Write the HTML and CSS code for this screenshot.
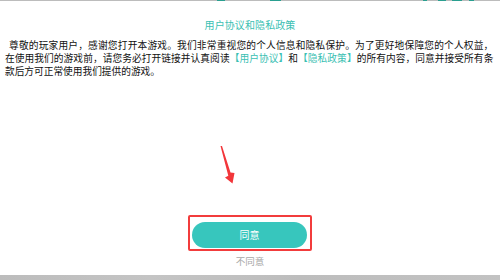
FILE: index.html
```html
<!DOCTYPE html>
<html lang="zh-CN">
<head>
<meta charset="utf-8">
<title>用户协议和隐私政策</title>
<link rel="stylesheet" href="styles.css">
</head>
<body>
<div class="page">
  <div class="topbar"></div>
  <h1 class="title">用户协议和隐私政策</h1>
  <div class="content">
    <span class="ln first">尊敬的玩家用户，感谢您打开本游戏。我们非常重视您的个人信息和隐私保护。为了更好地保障您的个人权益，</span>
    <span class="ln second">在使用我们的游戏前，请您务必打开链接并认真阅读<span class="link">【用户协议】</span>和<span class="link">【隐私政策】</span>的所有内容，同意并接受所有条</span>
    <span class="ln last">款后方可正常使用我们提供的游戏。</span>
  </div>
  <div class="actions">
    <div class="agree">同意<span class="highlight"></span></div>
    <div class="disagree">不同意</div>
  </div>
  <div class="bottombar"></div>
  <svg class="arrow" width="30" height="50" viewBox="215 140 30 50">
    <polygon points="220.5,146 222,146 230.5,172.5 234.5,173 232.5,183.5 225,177.5 228.3,175.8" fill="#f2363a"/>
  </svg>
</div>
</body>
</html>
```
FILE: styles.css
```css
html, body {
  margin: 0;
  padding: 0;
  background: #ffffff;
}
.page {
  position: relative;
  width: 500px;
  height: 280px;
  display: flex;
  flex-direction: column;
  background: #ffffff;
  font-family: "Noto Sans CJK SC", "Noto Sans", sans-serif;
  overflow: hidden;
}
.topbar {
  height: 1px;
  background: linear-gradient(to right,
    #bcbcbc 0, #bcbcbc 217px, #2a9f90 217px, #2a9f90 225px,
    #bcbcbc 225px, #bcbcbc 270px, #2a9f90 270px, #2a9f90 281px,
    #bcbcbc 281px, #bcbcbc 423px, #2a9f90 423px, #2a9f90 427px,
    #bcbcbc 427px, #bcbcbc 438px, #2a9f90 438px, #2a9f90 446px,
    #bcbcbc 446px, #bcbcbc 452px, #2a9f90 452px, #2a9f90 462px,
    #bcbcbc 462px, #bcbcbc 469px, #2a9f90 469px, #2a9f90 474px,
    #bcbcbc 474px, #bcbcbc 100%);
}
.title {
  margin: 17px 0 0;
  font-size: 10px;
  line-height: 14px;
  font-weight: normal;
  letter-spacing: 0.1px;
  text-align: center;
  color: #3bbfb3;
}
.content {
  margin-top: 7px;
  padding: 0 3px 0 5px;
  font-size: 9.7px;
  line-height: 13px;
  color: #111111;
}
.ln {
  display: block;
  white-space: nowrap;
}
.ln.first {
  text-indent: 4px;
  letter-spacing: 0.2px;
}
.ln.second {
  letter-spacing: 0.08px;
}
.link {
  color: #3bbfb3;
}
.actions {
  margin-top: auto;
  margin-bottom: 8px;
  display: flex;
  flex-direction: column;
  align-items: center;
}
.agree {
  position: relative;
  width: 115px;
  height: 26px;
  margin-left: -1px;
  border-radius: 13px;
  background: #37c6bd;
  color: #ffffff;
  font-size: 10px;
  line-height: 26px;
  text-align: center;
}
.highlight {
  position: absolute;
  left: -4px;
  right: -5px;
  top: -7px;
  bottom: -3px;
  border: 2px solid #f23c3c;
  border-radius: 2px;
}
.disagree {
  margin-top: 7px;
  font-size: 9.5px;
  line-height: 12px;
  color: #a8a8a8;
}
.bottombar {
  height: 5px;
  background: linear-gradient(to right, #bcbcbc, #c4c4c4 30%, #bdbdbd 60%, #c2c2c2);
}
.arrow {
  position: absolute;
  left: 215px;
  top: 140px;
}
```
